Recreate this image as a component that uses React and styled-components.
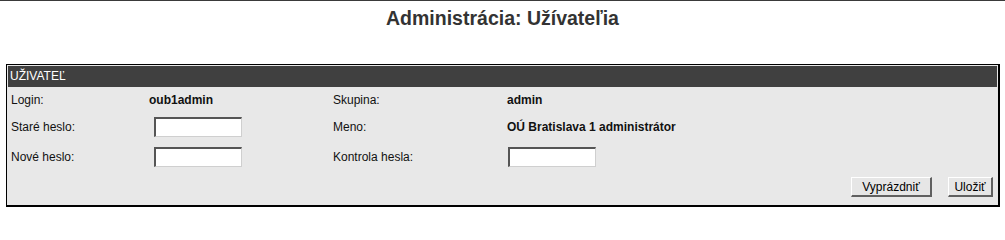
import React from 'react'
import styled, { createGlobalStyle } from 'styled-components'

const GlobalStyle = createGlobalStyle`
  html, body {
    margin: 0;
    padding: 0;
    background: #ffffff;
  }
  body {
    font-family: "Liberation Sans", Arial, sans-serif;
    font-size: 12px;
    color: #000;
  }
`

const fields = [
  { label: 'Login:', value: 'oub1admin' },
  { label: 'Skupina:', value: 'admin' },
  { label: 'Staré heslo:', input: true, indent: 5 },
  { label: 'Meno:', value: 'OÚ Bratislava 1 administrátor' },
  { label: 'Nové heslo:', input: true, indent: 5 },
  { label: 'Kontrola hesla:', input: true },
]

export default function App() {
  return (
    <Page>
      <GlobalStyle />
      <Title>Administrácia: Užívateľia</Title>
      <Panel>
        <Header>UŽIVATEĽ</Header>
        <Form onSubmit={e => e.preventDefault()}>
          {fields.map(f => (
            <React.Fragment key={f.label}>
              <Label>{f.label}</Label>
              <Cell>
                {f.input ? (
                  <TextInput type="password" indent={f.indent} />
                ) : (
                  <Value>{f.value}</Value>
                )}
              </Cell>
            </React.Fragment>
          ))}
          <Actions>
            <Button type="reset" width={81}>Vyprázdniť</Button>
            <Button type="submit" width={45}>Uložiť</Button>
          </Actions>
        </Form>
      </Panel>
    </Page>
  )
}

const Page = styled.div`
  border-top: 1px solid #3a3a3a;
  width: 1005px;
  box-sizing: border-box;
`

const Title = styled.h1`
  margin: 0;
  height: 63px;
  padding-top: 6px;
  box-sizing: border-box;
  text-align: center;
  font-family: "Liberation Sans", Arial, sans-serif;
  font-size: 19.5px;
  font-weight: bold;
  color: #333333;
`

const Panel = styled.div`
  margin: 0 5px 0 6px;
  border: 1px solid #000;
  border-width: 1px 2px 2px 1px;
  padding: 1px;
  background: #e8e8e8;
`

const Header = styled.div`
  height: 21px;
  line-height: 21px;
  padding-left: 2px;
  background: #404040;
  color: #ffffff;
  font-size: 12px;
`

const Form = styled.form`
  display: grid;
  grid-template-columns: 138px 184px 174px 1fr;
  grid-template-rows: 25px 29px 31px 30px;
  align-items: center;
  padding: 0 4px 2px 3px;
`

const Label = styled.div`
  color: #111;
`

const Cell = styled.div`
  display: flex;
  align-items: center;
`

const Value = styled.span`
  font-weight: bold;
  color: #111;
`

const TextInput = styled.input`
  box-sizing: border-box;
  width: 88px;
  height: 20px;
  margin: 0 0 0 ${p => p.indent || 1}px;
  padding: 1px 3px;
  background: #fff;
  border-style: solid;
  border-width: 2px 1px 1px 2px;
  border-color: #555 #cfcfcf #cfcfcf #555;
  font-family: "Liberation Sans", Arial, sans-serif;
  font-size: 12px;
  outline: none;
`

const Actions = styled.div`
  grid-column: 1 / -1;
  display: flex;
  justify-content: flex-end;
  gap: 16px;
`

const Button = styled.button`
  box-sizing: border-box;
  width: ${p => p.width}px;
  height: 20px;
  padding: 0;
  background: #e6e6e6;
  border-style: solid;
  border-width: 1px 2px 2px 1px;
  border-color: #ffffff #606060 #606060 #ffffff;
  font-family: "Liberation Sans", Arial, sans-serif;
  font-size: 12px;
  color: #000;
`
